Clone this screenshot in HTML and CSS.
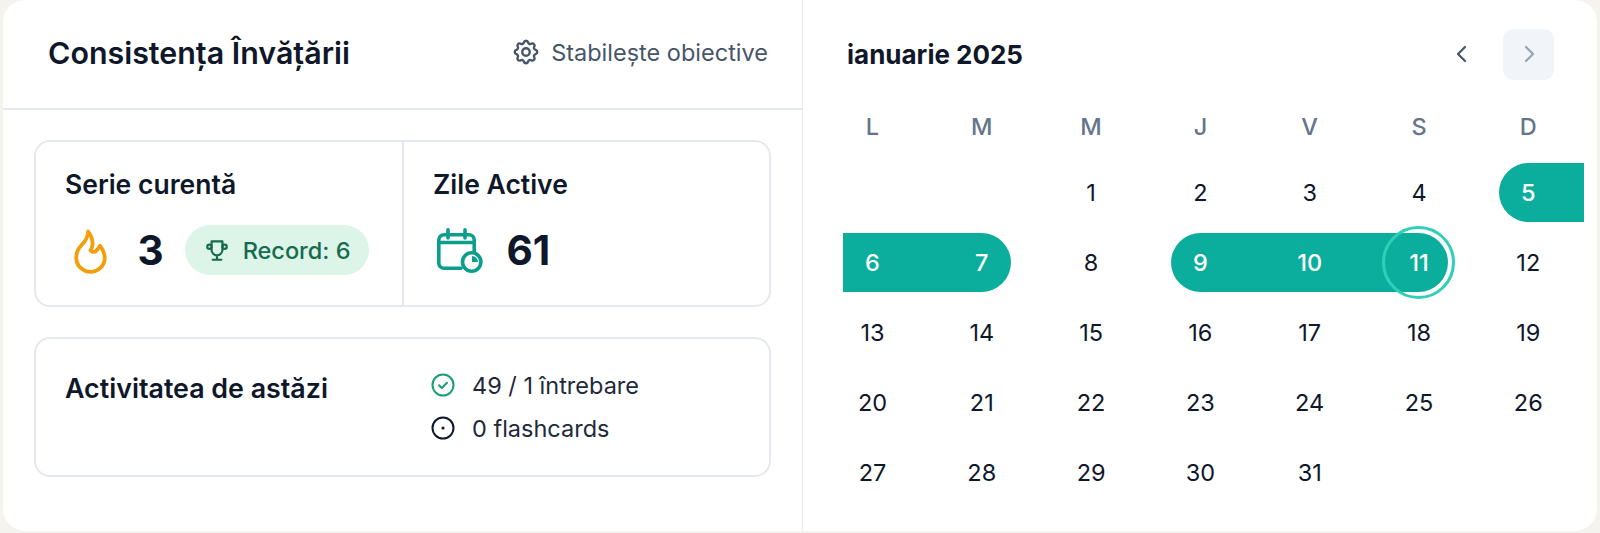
FILE: index.html
```html
<!DOCTYPE html>
<html lang="ro">
<head>
<meta charset="utf-8">
<title>Consistența Învățării</title>
<link rel="stylesheet" href="styles.css">
</head>
<body>
<main class="card">
  <section class="left">
    <header class="head">
      <h1 class="title">Consistența Învățării</h1>
      <a class="goal">
        <svg class="gear" viewBox="0 0 24 24"><path d="M10.325 4.317c.426 -1.756 2.924 -1.756 3.35 0a1.724 1.724 0 0 0 2.573 1.066c1.543 -.94 3.31 .826 2.37 2.37a1.724 1.724 0 0 0 1.065 2.572c1.756 .426 1.756 2.924 0 3.35a1.724 1.724 0 0 0 -1.066 2.573c.94 1.543 -.826 3.31 -2.37 2.37a1.724 1.724 0 0 0 -2.572 1.065c-.426 1.756 -2.924 1.756 -3.35 0a1.724 1.724 0 0 0 -2.573 -1.066c-1.543 .94 -3.31 -.826 -2.37 -2.37a1.724 1.724 0 0 0 -1.065 -2.572c-1.756 -.426 -1.756 -2.924 0 -3.35a1.724 1.724 0 0 0 1.066 -2.573c-.94 -1.543 .826 -3.31 2.37 -2.37c1 .608 2.296 .07 2.572 -1.065z"/><circle cx="12" cy="12" r="3"/></svg>
        <span>Stabilește obiective</span>
      </a>
    </header>
    <div class="body">
      <div class="box stats">
        <div class="stat stat-a">
          <h2 class="label">Serie curentă</h2>
          <div class="value-row">
            <svg class="flame" viewBox="0 0 24 24"><path d="M12 12c2-2.96 0-7-1-8 0 3.038-1.773 4.741-3 6-1.226 1.26-2 3.24-2 5a6 6 0 1 0 12 0c0-1.532-1.056-3.94-2-5-1.786 3-2.791 3-4 2z"/></svg>
            <span class="value">3</span>
            <span class="badge">
              <svg class="trophy" viewBox="0 0 24 24"><path d="M8 21h8M12 17v4M7 4h10M17 4v8a5 5 0 0 1-10 0V4"/><circle cx="5" cy="9" r="2"/><circle cx="19" cy="9" r="2"/></svg>
              Record: 6
            </span>
          </div>
        </div>
        <div class="stat stat-b">
          <h2 class="label">Zile Active</h2>
          <div class="value-row">
            <svg class="cal" viewBox="0 0 46 46"><path class="cal-line" d="M24 40.2H7a5.2 5.2 0 0 1-5.2-5.2V12a5.2 5.2 0 0 1 5.2-5.2h25a5.2 5.2 0 0 1 5.2 5.2v12M11 1.8V10M28 1.8V10M1.8 14.5h35.4"/><circle class="cal-line" cx="34.7" cy="34" r="9.2"/><path class="cal-fill" d="M35 28v6h6a6 6 0 0 0-6-6z"/></svg>
            <span class="value">61</span>
          </div>
        </div>
      </div>
      <div class="box activity">
        <h2 class="label">Activitatea de astăzi</h2>
        <ul class="act-list">
          <li class="act-item">
            <svg class="act-icon act-green" viewBox="0 0 24 24"><circle cx="12" cy="12" r="10.5"/><path d="M8 12.3l2.8 2.7L16 9.8"/></svg>
            49 / 1 întrebare
          </li>
          <li class="act-item">
            <svg class="act-icon" viewBox="0 0 24 24"><circle cx="12" cy="12" r="10.5"/><circle class="dot" cx="12" cy="12" r="1.6"/></svg>
            0 flashcards
          </li>
        </ul>
      </div>
    </div>
  </section>
  <section class="right">
    <header class="cal-head">
      <h2 class="month">ianuarie 2025</h2>
      <div class="nav">
        <button class="nav-btn"><svg class="chev" viewBox="0 0 24 24"><path d="M15 5l-7 7 7 7"/></svg></button>
        <button class="nav-btn nav-off"><svg class="chev" viewBox="0 0 24 24"><path d="M9 5l7 7-7 7"/></svg></button>
      </div>
    </header>
    <div class="weekdays">
      <span>L</span><span>M</span><span>M</span><span>J</span><span>V</span><span>S</span><span>D</span>
    </div>
    <div class="days">
      <span></span><span></span>
      <span class="day">1</span><span class="day">2</span><span class="day">3</span><span class="day">4</span>
      <span class="day on start edge">5</span>
      <span class="day on next">6</span><span class="day on end">7</span>
      <span class="day">8</span>
      <span class="day on start next">9</span><span class="day on to-today">10</span><span class="day on today">11</span>
      <span class="day">12</span>
      <span class="day">13</span><span class="day">14</span><span class="day">15</span><span class="day">16</span><span class="day">17</span><span class="day">18</span><span class="day">19</span>
      <span class="day">20</span><span class="day">21</span><span class="day">22</span><span class="day">23</span><span class="day">24</span><span class="day">25</span><span class="day">26</span>
      <span class="day">27</span><span class="day">28</span><span class="day">29</span><span class="day">30</span><span class="day">31</span>
    </div>
  </section>
</main>
</body>
</html>
```

FILE: styles.css
```css
* { box-sizing: border-box; }
html, body { height: 100%; }
body {
  margin: 0;
  padding: 0 3px 2px;
  background: #f4f3ee;
  font-family: "Inter", "Liberation Sans", sans-serif;
  color: #0f172a;
  overflow: hidden;
}
h1, h2, ul { margin: 0; padding: 0; }
ul { list-style: none; }

.card {
  display: flex;
  height: 531px;
  background: #fff;
  border-radius: 22px;
  overflow: hidden;
}
.left {
  width: 800px;
  flex: none;
  border-right: 1px solid #e5e9ef;
}
.head {
  height: 110px;
  padding: 0 34px 2px 45px;
  display: flex;
  align-items: center;
  justify-content: space-between;
  border-bottom: 2px solid #e5e9ef;
}
.title { font-size: 30.4px; font-weight: 600; }
.goal {
  display: flex;
  align-items: center;
  gap: 10px;
  font-size: 23.5px;
  color: #475569;
  margin-top: -2px;
}
.gear { width: 30px; height: 30px; fill: none; stroke: #475569; stroke-width: 1.9; }

.body { padding: 30px 31px 0; }
.box {
  border: 2px solid #e5e9ef;
  border-radius: 16px;
}
.stats { display: flex; height: 167px; }
.stat { padding: 27px 29px 0; }
.stat-a { width: 368px; border-right: 2px solid #e5e9ef; }
.label { font-size: 26.5px; font-weight: 600; line-height: 30px; }
.value-row { display: flex; align-items: center; height: 50px; margin-top: 26px; }
.flame { width: 57px; height: 57px; flex: none; margin-left: -3px; fill: none; stroke: #f59e0b; stroke-width: 1.6; stroke-linejoin: round; stroke-linecap: round; }
.value { font-size: 40.5px; font-weight: 700; margin-left: 18.5px; }
.badge {
  display: flex;
  align-items: center;
  gap: 13px;
  height: 50px;
  margin-left: 21px;
  padding: 0 19px;
  border-radius: 25px;
  background: #dcf5e8;
  color: #166b4e;
  font-size: 23.5px;
  font-weight: 500;
}
.trophy { width: 26px; height: 26px; flex: none; fill: none; stroke: #166b4e; stroke-width: 2; stroke-linecap: round; stroke-linejoin: round; }
.cal { width: 46px; height: 46px; flex: none; margin: 2px 0 0 4px; fill: none; }
.cal-line { fill: none; stroke: #0c9e8d; stroke-width: 3.6; stroke-linecap: round; stroke-linejoin: round; }
.cal-fill { fill: #0c9e8d; }
.stat-b .value { margin-left: 23.5px; }

.activity {
  display: flex;
  height: 140px;
  margin-top: 30px;
  padding: 34px 29px 0;
}
.activity .label { width: 366px; flex: none; font-size: 26.8px; }
.act-list { display: flex; flex-direction: column; gap: 13px; margin-top: -3px; }
.act-item { display: flex; align-items: center; gap: 17px; height: 30px; font-size: 23.5px; color: #1e293b; }
.act-icon { width: 24px; height: 24px; fill: none; stroke: #0f172a; stroke-width: 2; stroke-linecap: round; stroke-linejoin: round; }
.act-green { stroke: #16a06f; }
.dot { fill: #0f172a; stroke: none; }

.right { flex: 1; padding: 0 0 0 40px; }
.cal-head {
  height: 108px;
  padding-right: 43px;
  display: flex;
  align-items: center;
  justify-content: space-between;
}
.month { font-size: 26px; font-weight: 700; margin-left: 4px; }
.nav { display: flex; gap: 16px; }
.nav-btn {
  width: 51px;
  height: 51px;
  padding: 0;
  border: 0;
  background: none;
  border-radius: 10px;
  display: flex;
  align-items: center;
  justify-content: center;
}
.nav-off { background: #f1f5f9; }
.chev { width: 24px; height: 24px; fill: none; stroke: #475569; stroke-width: 2.2; stroke-linecap: round; stroke-linejoin: round; }
.nav-off .chev { stroke: #94a3b8; }

.weekdays, .days {
  display: grid;
  grid-template-columns: repeat(7, 59px);
  column-gap: 50.3px;
  font-size: 23.5px;
}
.weekdays { height: 36px; color: #64748b; font-weight: 500; text-align: center; line-height: 38px; }
.days { grid-auto-rows: 59px; row-gap: 11px; margin-top: 18.5px; }
.day { display: flex; align-items: center; justify-content: center; border-radius: 50%; }
.on { background: #0bae9c; color: #fff; font-weight: 500; border-radius: 0; }
.next { margin-right: -51px; padding-right: 51px; }
.to-today { margin-right: -80px; padding-right: 80px; }
.edge { margin-right: -26px; padding-right: 26px; }
.start { border-radius: 30px 0 0 30px; }
.end { border-radius: 0 30px 30px 0; }
.today { outline: 3.5px solid #2fcfba; outline-offset: 4px; border-radius: 50%; }
```
